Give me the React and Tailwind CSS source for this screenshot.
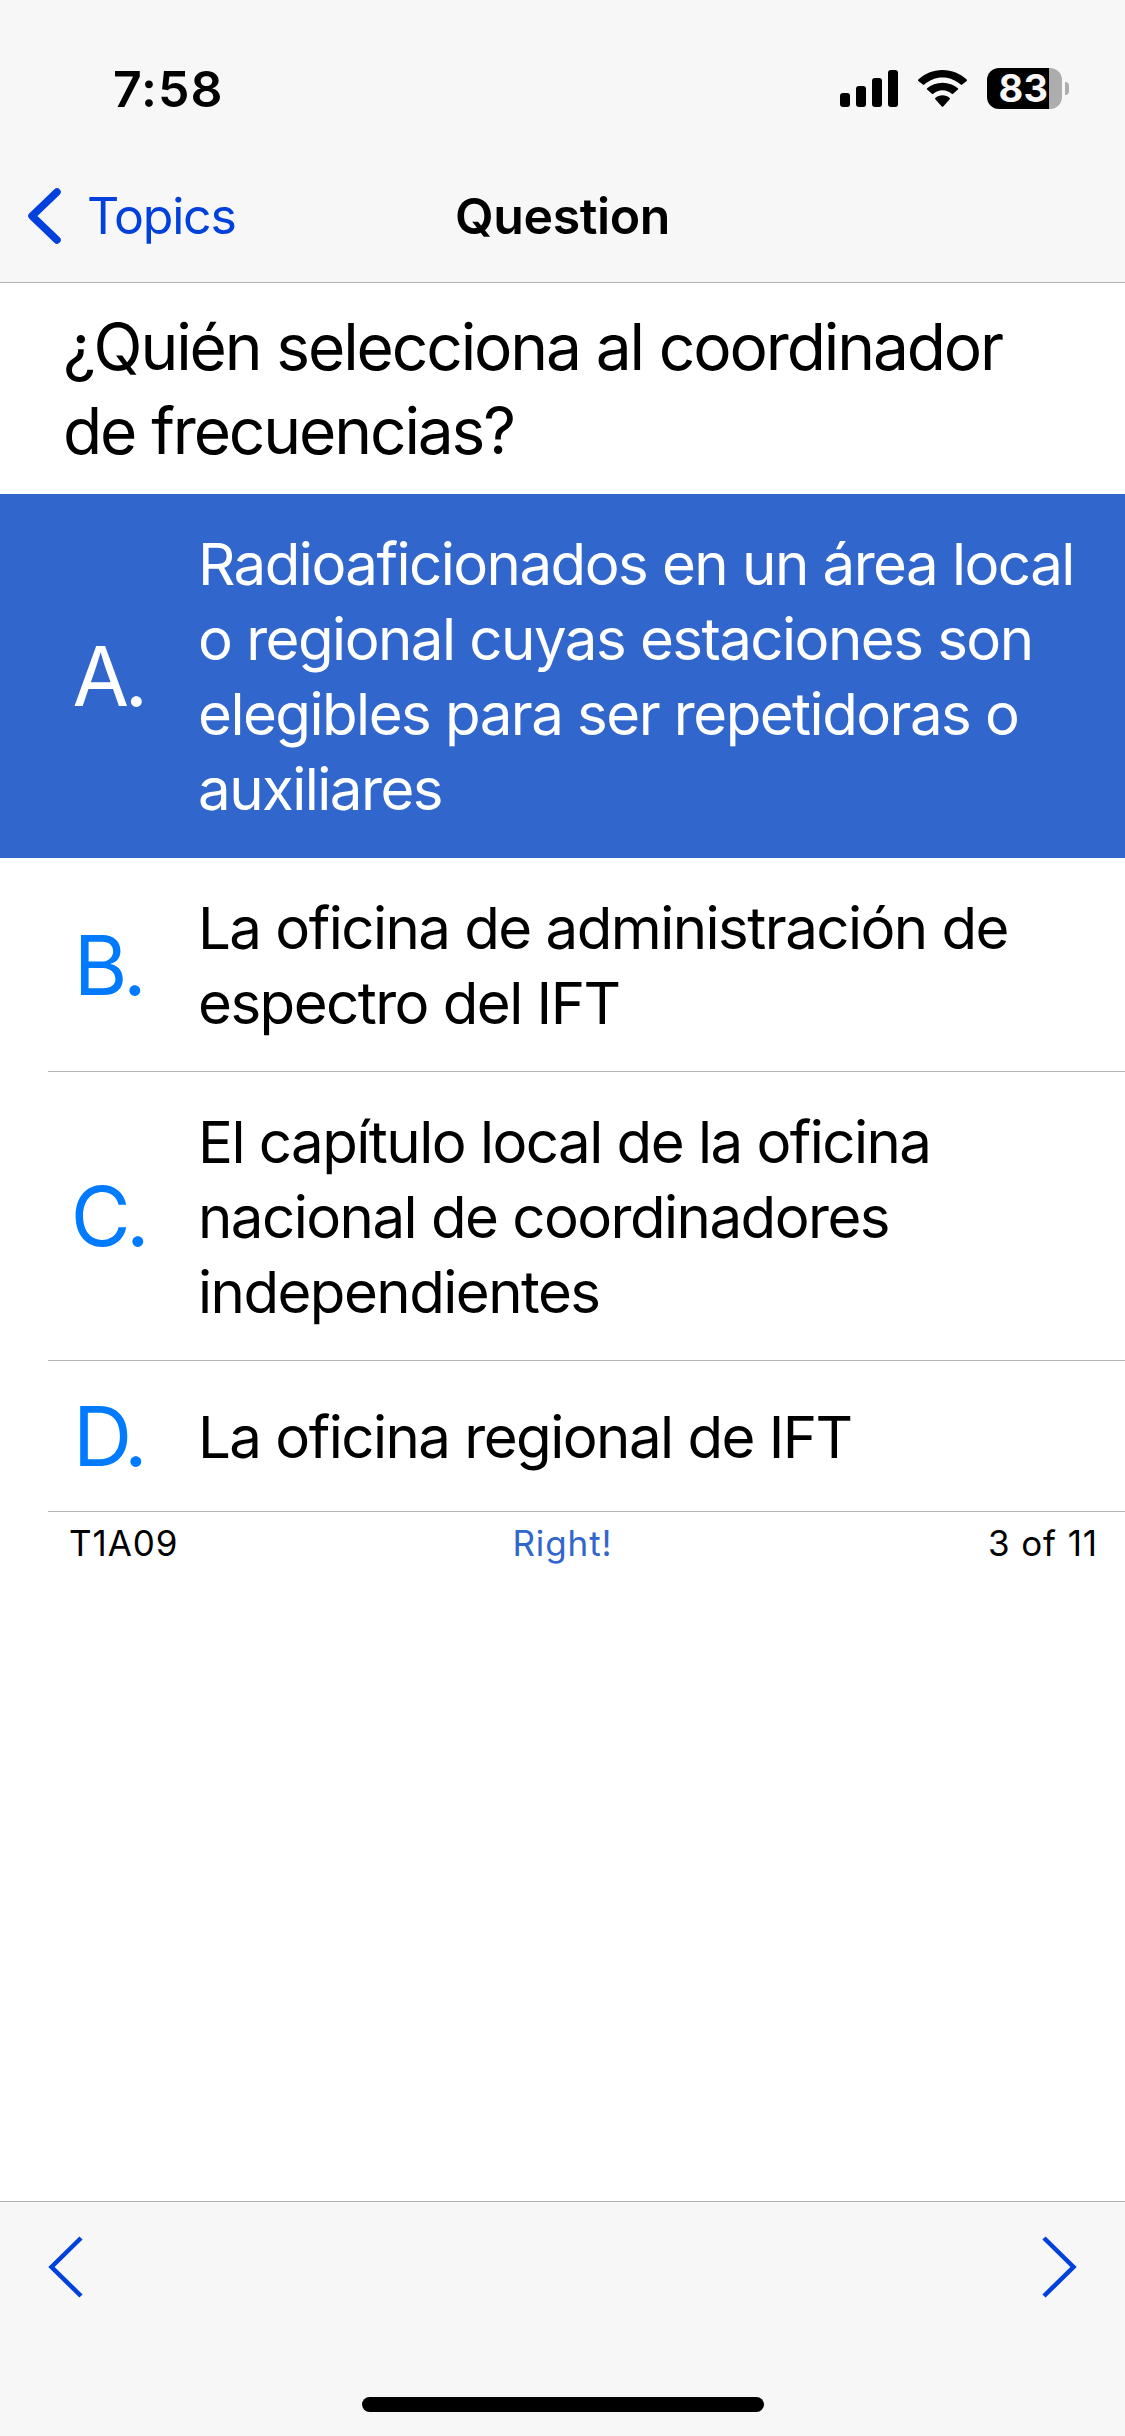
import clsx from 'clsx';

const answers = [
  {
    letter: 'A.',
    lines: ['Radioaficionados en un área local', 'o regional cuyas estaciones son', 'elegibles para ser repetidoras o', 'auxiliares'],
    selected: true,
  },
  { letter: 'B.', lines: ['La oficina de administración de', 'espectro del IFT'] },
  { letter: 'C.', lines: ['El capítulo local de la oficina', 'nacional de coordinadores', 'independientes'] },
  { letter: 'D.', lines: ['La oficina regional de IFT'] },
];

const StatusBar = () => (
  <div className="flex h-[150px] items-start justify-between pl-[113px] pr-[56px]">
    <span className="mt-[59px] text-[50px] leading-[61px] font-semibold tracking-[0.02em]">7:58</span>
    <div className="mt-[68px] flex h-[41px] items-start">
      <svg className="mt-[2px] mr-[19px]" width="58" height="37" viewBox="0 0 58 37">
        <rect x="0" y="23" width="10" height="14" rx="3" />
        <rect x="16" y="16" width="10" height="21" rx="3" />
        <rect x="32" y="8" width="10" height="29" rx="3" />
        <rect x="48" y="0" width="10" height="37" rx="3" />
      </svg>
      <svg className="mt-[2px] mr-[19px]" width="51" height="37" viewBox="0 0 51 37">
        <path d="M25.5 7.5c7 0 13.400 2.700 18.200 7.100.4.400 1 .400 1.400 0l4.600-3.600c.4-.4.400-1 0-1.400C43.300 3.700 34.800 0 25.500 0S7.700 3.700 1.300 9.600c-.4.400-.4 1 0 1.400l4.600 3.600c.4.400 1 .400 1.400 0C12.100 10.200 18.500 7.500 25.500 7.500z" />
        <path d="M25.500 20.300c3.500 0 6.700 1.300 9.200 3.500.4.400 1 .400 1.400 0l4.800-4.200c.4-.4.400-1 0-1.400C36.900 14.900 31.400 12.700 25.500 12.700S14.100 14.900 10.100 18.200c-.4.400-.4 1 0 1.400l4.800 4.200c.4.400 1 .400 1.400 0 2.500-2.200 5.700-3.500 9.200-3.500z" />
        <path d="M32.700 29.200c.4-.4.400-1 0-1.300-2-1.700-4.500-2.700-7.200-2.700s-5.200 1-7.200 2.700c-.4.300-.4.900 0 1.300l6.500 7.200c.4.400 1 .400 1.400 0z" />
      </svg>
      <div className="flex h-[41px] w-[75px] items-center justify-center rounded-[12px] bg-linear-to-r from-black from-[62px] to-[#adadad] to-[62px] pr-[2px]">
        <span className="text-[38px] leading-[41px] font-bold tracking-[0.01em] text-[#f7f7f7]">83</span>
      </div>
      <div className="mt-[14px] ml-[3px] h-[13px] w-[4px] rounded-r-full bg-[#adadad]" />
    </div>
  </div>
);

const NavBar = () => (
  <div className="grid h-[132px] grid-cols-3 items-start pt-[31px]">
    <button className="flex items-center text-[#0040dd]">
      <svg className="ml-[27px] mr-[26px] mt-[3px]" width="34" height="58" viewBox="0 0 34 58" fill="none" stroke="currentColor" strokeWidth="7.500" strokeLinecap="round" strokeLinejoin="round">
        <path d="M30 5 5 29 30 53" />
      </svg>
      <span className="mt-[4px] text-[50px] leading-[62px] tracking-[-0.025em]">Topics</span>
    </button>
    <h1 className="mt-[4px] text-center text-[50px] leading-[62px] font-semibold tracking-[-0.008em]">Question</h1>
  </div>
);

const AnswerRow = ({ letter, lines, selected }) => (
  <li className={clsx('flex min-h-[151px]', selected ? 'bg-[#3166cc] text-white' : 'pl-12')}>
    <div
      className={clsx(
        'flex flex-1 items-center border-b pt-8 pb-[31px]',
        selected ? 'border-transparent pl-12' : 'border-[#b4b4b6]'
      )}
    >
      <span
        className={clsx(
          'w-[124px] shrink-0 pr-[4px] text-center text-[82px] leading-[75px] tracking-[-0.055em]',
          selected ? 'text-white' : 'text-[#007aff]'
        )}
      >
        {letter}
      </span>
      <p className="relative top-px ml-[26px] text-[58.200px] leading-[75px] tracking-[-0.0265em]">
        {lines.map((line) => (
          <span key={line} className="block whitespace-nowrap">{line}</span>
        ))}
      </p>
    </div>
  </li>
);

const Toolbar = () => (
  <footer className="flex h-[235px] flex-col items-center justify-between border-t border-[#b2b2b2] bg-[#f7f7f7] pb-[24px]">
    <div className="flex w-full justify-between pt-[33px] pl-[47px] pr-[47px] text-[#0040dd]">
      <svg width="36" height="64" viewBox="0 0 36 64" fill="none" stroke="currentColor" strokeWidth="4.500">
        <path d="M34 3 4.500 32 34 61" />
      </svg>
      <svg width="36" height="64" viewBox="0 0 36 64" fill="none" stroke="currentColor" strokeWidth="4.500">
        <path d="M2 3 31.500 32 2 61" />
      </svg>
    </div>
    <div className="h-[15px] w-[402px] rounded-full bg-black" />
  </footer>
);

export default function App() {
  return (
    <div className="flex h-[2436px] w-[1125px] flex-col overflow-hidden bg-white font-['Inter',sans-serif] text-black">
      <header className="h-[283px] border-b border-[#b2b2b2] bg-[#f7f7f7]">
        <StatusBar />
        <NavBar />
      </header>

      <main className="flex-1">
        <h2 className="h-[211px] pt-[22px] pl-[63px] text-[64px] leading-[84px] tracking-[-0.033em]">
          <span className="block">¿Quién selecciona al coordinador</span>
          <span className="block">de frecuencias?</span>
        </h2>

        <ul>
          {answers.map((answer) => (
            <AnswerRow key={answer.letter} {...answer} />
          ))}
        </ul>

        <div className="grid grid-cols-3 pt-[9px] text-[35px] leading-[44px] tracking-[0.026em]">
          <span className="pl-[69px]">T1A09</span>
          <span className="text-center text-[#3166cc]">Right!</span>
          <span className="pr-[27px] text-right">3 of 11</span>
        </div>
      </main>

      <Toolbar />
    </div>
  );
}
